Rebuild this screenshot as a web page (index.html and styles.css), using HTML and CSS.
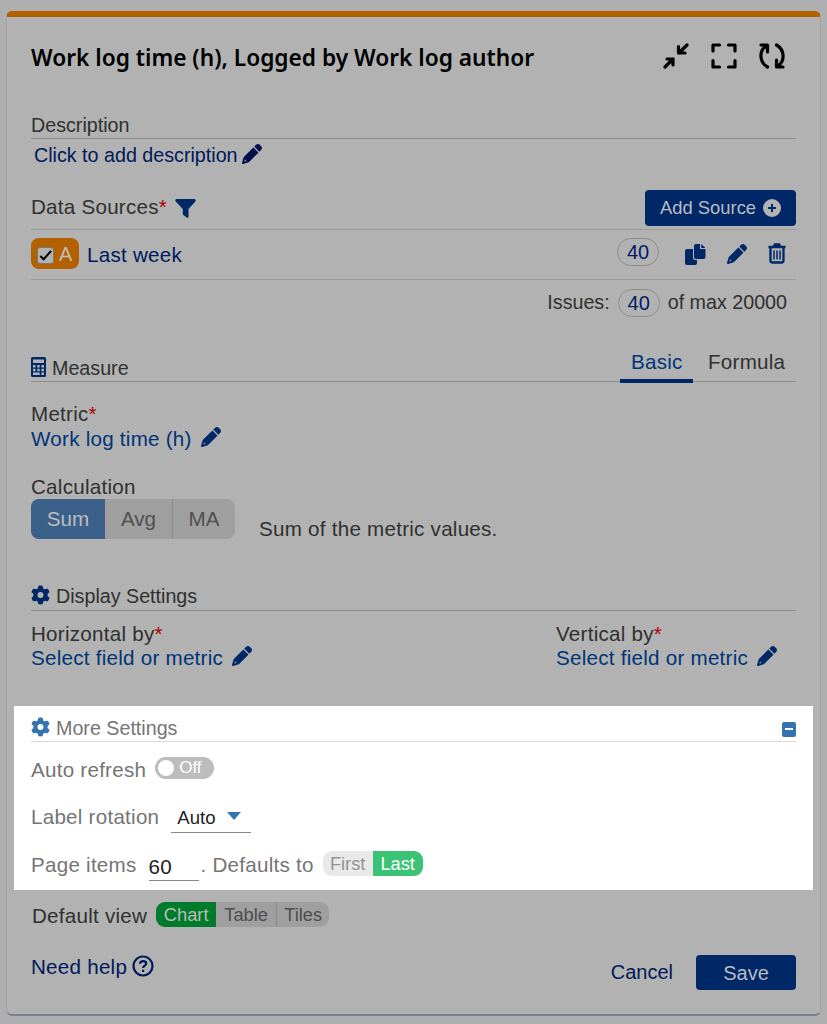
FILE: index.html
```html
<!DOCTYPE html>
<html lang="en">
<head>
  <meta charset="UTF-8">
  <title>Work log time (h), Logged by Work log author</title>
  <link rel="stylesheet" href="styles.css">
</head>
<body>
<svg class="sprite">
  <symbol id="pencil" viewBox="0 0 512 512">
    <path d="M410.3 231l11.3-11.3-33.9-33.9-62.1-62.1L291.7 89.8l-11.3 11.3-22.6 22.6L58.6 322.9c-10.4 10.4-18 23.3-22.2 37.4L1 480.7c-2.5 8.4-.2 17.5 6.1 23.7s15.3 8.5 23.7 6.1l120.3-35.4c14.1-4.2 27-11.8 37.4-22.2L387.7 253.7 410.3 231zM120 424l-9 11-35 11-12-12 11-35 11-9v23q0 11 11 11zM362.7 18.7L314.3 67.1l129.9 129.9 48.4-48.4c25-25 25-65.5 0-90.5L453.3 18.7c-25-25-65.5-25-90.5 0z"/>
  </symbol>
  <symbol id="gear" viewBox="0 0 512 512">
    <path d="M495.9 166.6c3.2 8.7 .5 18.4-6.4 24.6l-43.3 39.4c1.1 8.3 1.7 16.8 1.7 25.4s-.6 17.1-1.7 25.4l43.3 39.4c6.9 6.2 9.6 15.9 6.4 24.6c-4.4 11.9-9.7 23.3-15.8 34.3l-4.7 8.1c-6.6 11-14 21.4-22.1 31.2c-5.9 7.2-15.7 9.6-24.5 6.8l-55.7-17.7c-13.4 10.3-28.2 18.9-44 25.4l-12.5 57.1c-2 9.1-9 16.3-18.2 17.8c-13.8 2.3-28 3.5-42.5 3.5s-28.7-1.2-42.5-3.5c-9.2-1.5-16.2-8.7-18.2-17.8l-12.5-57.1c-15.8-6.5-30.6-15.1-44-25.4L83.1 425.9c-8.8 2.8-18.6 .3-24.5-6.8c-8.1-9.8-15.5-20.2-22.1-31.2l-4.7-8.1c-6.1-11-11.4-22.4-15.8-34.3c-3.2-8.7-.5-18.4 6.4-24.6l43.3-39.4C64.6 273.1 64 264.6 64 256s.6-17.1 1.7-25.4L22.4 191.2c-6.9-6.2-9.6-15.9-6.4-24.6c4.4-11.9 9.7-23.3 15.8-34.3l4.7-8.1c6.6-11 14-21.4 22.1-31.2c5.9-7.2 15.7-9.6 24.5-6.8l55.7 17.7c13.4-10.3 28.2-18.9 44-25.4l12.5-57.1c2-9.1 9-16.3 18.2-17.8C227.3 1.2 241.5 0 256 0s28.7 1.2 42.5 3.5c9.2 1.5 16.2 8.7 18.2 17.8l12.5 57.1c15.8 6.5 30.6 15.1 44 25.4l55.7-17.7c8.8-2.8 18.6-.3 24.5 6.8c8.1 9.8 15.5 20.2 22.1 31.2l4.7 8.1c6.1 11 11.4 22.4 15.8 34.3zM256 336a80 80 0 1 0 0-160 80 80 0 1 0 0 160z"/>
  </symbol>
</svg>

<div class="card">
  <div class="header">
    <h1>Work log time (h), Logged by Work log author</h1>
    <div class="tools">
      <svg class="tool" viewBox="0 0 26 26"><path d="M24 2L16 10M15.500 3.500V10H22M2 24L10 16M4 16h6v6"/></svg>
      <svg class="tool" viewBox="0 0 26 26"><path d="M2 8V2h6.500M17.500 2H24v6M24 17.500V24h-6.500M8.500 24H2v-6.500"/></svg>
      <svg class="tool" viewBox="0 0 26 26"><path d="M8.500 24C0 19 0 8 7 3M2 2h6.500v7M17.500 2c8.500 5 8.500 16 1.500 21M24 24h-6.500v-7"/></svg>
    </div>
  </div>

  <div class="title">Description</div>
  <div class="description">Click to add description <svg class="pencil"><use href="#pencil"/></svg></div>

  <div class="sources-head">
    <span class="label">Data Sources<i>*</i></span>
    <svg class="filter" viewBox="0 0 21 19"><path d="M1.500 0h18q1.800.8.800 2.500L13.500 10v8q-.5 1.200-1.800.6L8.300 16q-.5-.4-.5-1v-5L.7 2.500Q-.3.800 1.500 0z"/></svg>
    <button class="btn add">Add Source
      <svg viewBox="0 0 18 18"><circle cx="9" cy="9" r="9"/><path d="M9 5v8M5 9h8"/></svg>
    </button>
  </div>
  <div class="source">
    <span class="badge"><span class="check"><svg viewBox="0 0 16 16"><path d="M2.500 8.500l3.500 3.500 8-9"/></svg></span>A</span>
    <span class="source-name">Last week</span>
    <span class="pill">40</span>
    <svg class="copy" viewBox="0 0 21 21"><path d="M2 5h6v8.500q0 2.500 2.500 2.500H12v3q0 2-2 2H2q-2 0-2-2V7q0-2 2-2z"/><path d="M11 0h4v5h5.500v8q0 2-2 2H11q-2 0-2-2V2q0-2 2-2zM16.200 0l4.300 4h-4.300z"/></svg>
    <svg class="pencil"><use href="#pencil"/></svg>
    <svg class="trash" viewBox="0 0 18 21"><path d="M.5 4h17M5.500 4l1.300-2.500h4.400L12.500 4M2.500 4v13.500q0 2 2 2h9q2 0 2-2V4"/><path class="thin" d="M6 7.500v9M9 7.500v9M12 7.500v9"/></svg>
  </div>
  <div class="issues"><span>Issues:</span><span class="pill">40</span><span>of max 20000</span></div>

  <div class="title measure">
    <svg class="calc" viewBox="0 0 15 20"><path fill-rule="evenodd" d="M1.500 0h12Q15 0 15 1.500v17q0 1.500-1.500 1.500h-12Q0 20 0 18.500v-17Q0 0 1.500 0zM2 2.500V6h11V2.500zM2 8v2.500h2.500V8zM6.200 8v2.500h2.500V8zM10.400 8v2.500H13V8zM2 11.700v2.500h2.500v-2.500zM6.200 11.700v2.500h2.500v-2.500zM10.400 11.700v2.500H13v-2.500zM2 15.400v2.500h6.700v-2.500zM10.400 15.400v2.500H13v-2.500z"/></svg>
    <span>Measure</span>
    <div class="tabs"><span class="tab active">Basic</span><span class="tab">Formula</span></div>
  </div>
  <div class="field metric">
    <div class="label">Metric<i>*</i></div>
    <div class="link">Work log time (h) <svg class="pencil"><use href="#pencil"/></svg></div>
  </div>
  <div class="label calculation">Calculation</div>
  <div class="calc-row">
    <div class="group large"><span class="on">Sum</span><span>Avg</span><span>MA</span></div>
    <div class="hint">Sum of the metric values.</div>
  </div>

  <div class="title display"><svg class="gear"><use href="#gear"/></svg><span>Display Settings</span></div>
  <div class="axes">
    <div class="field">
      <div class="label">Horizontal by<i>*</i></div>
      <div class="link">Select field or metric <svg class="pencil"><use href="#pencil"/></svg></div>
    </div>
    <div class="field">
      <div class="label">Vertical by<i>*</i></div>
      <div class="link">Select field or metric <svg class="pencil"><use href="#pencil"/></svg></div>
    </div>
  </div>

  <div class="more">
    <div class="title"><svg class="gear"><use href="#gear"/></svg><span>More Settings</span><b class="collapse"></b></div>
    <div class="row refresh">Auto refresh <span class="switch">Off</span></div>
    <div class="row rotation">Label rotation <span class="select">Auto<b class="caret"></b></span></div>
    <div class="row items">Page items <span class="input">60</span><span class="defaults">. Defaults to</span>
      <div class="group small"><span>First</span><span class="on">Last</span></div>
    </div>
  </div>

  <div class="row view">Default view
    <div class="group small"><span class="on">Chart</span><span>Table</span><span>Tiles</span></div>
  </div>

  <div class="footer">
    <div class="help">Need help
      <svg viewBox="0 0 22 22"><circle cx="11" cy="11" r="9.500"/><path d="M8 8.700c.2-3.500 6.200-3.500 6.200 0 0 2-3.100 2-3.100 4.200M11.100 14.700v2.200"/></svg>
    </div>
    <span class="cancel">Cancel</span>
    <button class="btn save">Save</button>
  </div>
</div>
</body>
</html>
```
FILE: styles.css
```css
*{ margin: 0; padding: 0; box-sizing: border-box;}
body{ height: 1024px; padding: 11px 6px 0; overflow: hidden; background: #afafaf; font: 20px/24px "Liberation Sans", Arial, sans-serif; color: #303030;}
i{ font-style: normal; color: #b00000;}
svg{ display: block; flex: none; fill: #002766;}
.sprite{ display: none;}

.card{ height: 1005px; padding: 0 24px; background: #b2b2b2; border: 1px solid #a0a3aa; border-top: 6px solid #b36000; border-bottom: 2px solid #7c828c; border-radius: 6px;}
.header{ height: 95px; padding-top: 25px; display: flex; justify-content: space-between; align-items: flex-start;}
.header h1{ font: 600 22.7px/32px "Noto Sans", "Open Sans", sans-serif; color: #000; white-space: nowrap;}
.tools{ display: flex; gap: 22px; padding: 1px 11px 0 0;}
.tool{ width: 26px; height: 26px; fill: none; stroke: #000; stroke-width: 3.2; stroke-linecap: round; stroke-linejoin: round;}

.title{ height: 27px; display: flex; padding-top: 1px; border-bottom: 1px solid #8d8d8d; font-size: 19.7px;}
.label, .row, .link, .hint, .tabs, .help, .source-name{ font-size: 20.6px; letter-spacing: .25px;}
.pencil{ width: 20px; height: 20px;}
.gear{ width: 19px; height: 20px; margin: 1px 6px 0 0;}

.description{ display: flex; margin-top: 4px; padding-left: 3px; color: #00195a; font-size: 19.7px;}
.description .pencil{ margin-left: 4px; fill: #000e4a; margin-top: 1px;}

.sources-head{ display: flex; align-items: flex-start; height: 43px; margin-top: 20px; border-bottom: 1px solid #999;}
.sources-head .label{ margin-top: 8px;}
.filter{ width: 21px; height: 19px; margin: 12px 0 0 8px;}
.btn{ border: 0; border-radius: 4px; background: #002766; color: #b8bcc4; font: 18.4px/24px "Liberation Sans", Arial, sans-serif;}
.add{ display: flex; align-items: center; width: 151px; height: 36px; margin: 3px 0 0 auto; padding-left: 15px; white-space: nowrap;}
.add svg{ width: 18px; height: 18px; margin-left: 7px; fill: #b2b2b2; stroke: #002766; stroke-width: 2;}
.add circle{ stroke: none;}

.source{ display: flex; align-items: center; height: 50px; border-bottom: 1px solid #999;}
.badge{ display: flex; align-items: center; width: 48px; height: 31px; margin-top: -2px; padding-left: 6px; border-radius: 8px; background: #b36000; color: #c4bdb4;}
.check{ width: 17px; height: 17px; margin: 3px 5px 0 0; border-radius: 3px; background: #b2b2b2; border: 1px solid #777;}
.check svg{ width: 15px; height: 15px; fill: none; stroke: #000; stroke-width: 2.2;}
.source-name{ margin: 0 0 0 8px; color: #00195a;}
.pill{ width: 42px; height: 28px; border: 1px solid #8e8e8e; border-radius: 14px; text-align: center; line-height: 26px; font-size: 20px; color: #001a66;}
.source .pill{ margin: -5px 26px 0 auto;}
.source .pencil{ margin: -1px 21px 0;}
.copy{ width: 21px; height: 21px; margin-top: -1px;}
.trash{ width: 18px; height: 21px; margin: -2px 10px 0 0; fill: none; stroke: #002766; stroke-width: 2.3;}
.trash .thin{ stroke-width: 1.5;}
.issues{ display: flex; justify-content: flex-end; height: 28px; margin-top: 9px; padding-right: 9px; line-height: 26px; font-size: 19.7px;}
.issues .pill{ margin: 0 8px;}

.measure{ height: 34px; margin-top: 31px; padding-top: 8px;}
.calc{ width: 15px; height: 20px; margin: 1px 6px 0 0;}
.tabs{ display: flex; margin: -6px 0 0 auto;}
.tab{ width: 99px; height: 33px; padding-left: 11px;}
.tab.active{ width: 73px; margin-right: 4px; border-bottom: 4px solid #002766; color: #00347a;}
.metric{ margin-top: 20px;}
.metric .link{ margin-top: 1px;}
.link{ display: flex; color: #003478;}
.link .pencil{ margin-left: 9px;}
.calculation{ margin-top: 24px;}
.calc-row{ display: flex; height: 40px;}
.hint{ margin: 18px 0 0 24px;}

.group{ display: flex; overflow: hidden; background: #9f9f9f; color: #505050;}
.group span{ border-left: 1px solid #8b8b8b; text-align: center;}
.group span:first-child, .group .on + span{ border-left: 0;}
.large{ width: 204px; border-radius: 8px; line-height: 40px; font-size: 20.6px;}
.large span{ width: 67px;}
.large .on{ width: 74px; background: #3b618a; color: #bdbdbd;}
.large span:last-child{ width: 63px;}
.small{ height: 25px; border-radius: 9px; font-size: 18.3px; line-height: 26px; letter-spacing: 0;}

.display{ margin-top: 45px; padding-top: 0;}
.axes{ display: grid; grid-template-columns: 525px 1fr; margin-top: 11px; white-space: nowrap;}

.more{ height: 184px; margin: 36px -17px 0; padding: 9px 17px 0; background: #fff; color: #757575;}
.more .title{ border-color: #d8d8d8;}
.more .gear{ fill: #3572b0;}
.collapse{ width: 14px; height: 15px; margin: 6px 0 0 auto; padding: 6px 3px; border-radius: 2px; background: #3572b0;}
.collapse::before{ content: ""; display: block; height: 2px; background: #fff;}
.row{ display: flex; height: 24px; white-space: nowrap;}
.refresh{ margin-top: 16px;}
.switch{ display: flex; width: 59px; height: 22px; margin: -1px 0 0 9px; padding: 3px; border-radius: 11px; background: #bdbdbd; color: #fff; font-size: 17px; line-height: 16px; letter-spacing: 0;}
.switch::before{ content: ""; width: 16px; height: 16px; margin-right: 5px; border-radius: 50%; background: #fff;}
.rotation{ margin-top: 23px;}
.select{ display: flex; width: 80px; height: 28px; margin-left: 12px; padding-left: 6px; border-bottom: 1px solid #8a8a8a; color: #222; font-size: 18.6px; line-height: 26px; letter-spacing: 0;}
.caret{ width: 0; height: 0; margin: 7px 0 0 11px; border: 7px solid transparent; border-top: 8px solid #3572b0; border-bottom: 0;}
.items{ margin-top: 24px;}
.input{ width: 50px; height: 29px; margin: -1px 0 0 12px; border-bottom: 1px solid #8a8a8a; color: #222; line-height: 29px;}
.defaults{ margin-left: 2px;}
.items .group{ width: 100px; margin: -2px 0 0 9px; background: #e9e9e9; color: #929292;}
.items .group span{ width: 50px;}
.items .on{ border: 0; background: #3cc274; color: #fff;}

.view{ margin-top: 14px; padding-left: 1px;}
.view .group{ width: 173px; margin: -2px 0 0 9px; color: #4d4d4d;}
.view .group span{ width: 60px;}
.view .on{ background: #007a2b; color: #b8bcb9;}
.view .group span:last-child{ width: 53px;}

.footer{ display: flex; margin-top: 26px; color: #00195a;}
.help{ display: flex; flex: 1; margin-top: 1px;}
.help svg{ width: 22px; height: 22px; margin: 0 0 0 5px; fill: none; stroke: #00195a; stroke-width: 2.2;}
.cancel{ margin: 6px 23px 0 0;}
.save{ width: 100px; height: 35px; margin-top: 1px; font-size: 20px;}
```
